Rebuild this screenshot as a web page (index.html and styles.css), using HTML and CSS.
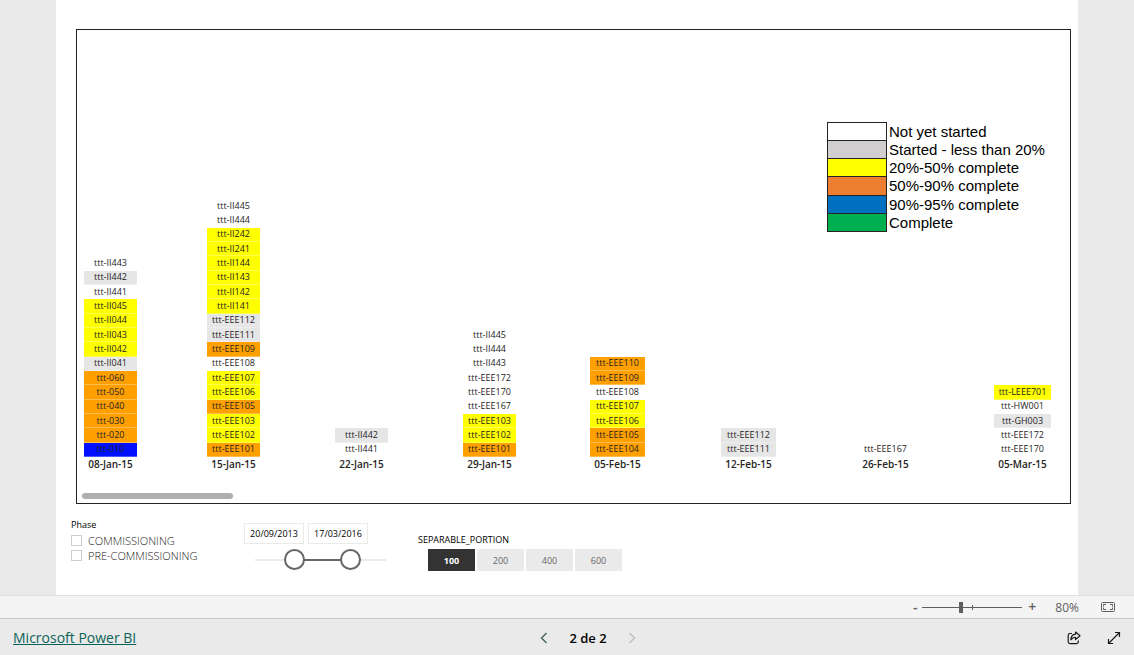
FILE: index.html
```
<!DOCTYPE html>
<html lang="es">
<head>
<meta charset="utf-8">
<meta name="viewport" content="width=device-width, initial-scale=1">
<title>Microsoft Power BI</title>
<link rel="stylesheet" href="styles.css">
</head>
<body>
<main class="stage">
  <div class="report">
    <section class="chart" aria-label="Schedule">
      <ul class="legend">
        <li><span class="swatch none"></span>Not yet started</li>
        <li><span class="swatch started"></span>Started - less than 20%</li>
        <li><span class="swatch quarter"></span>20%-50% complete</li>
        <li><span class="swatch half"></span>50%-90% complete</li>
        <li><span class="swatch almost"></span>90%-95% complete</li>
        <li><span class="swatch done"></span>Complete</li>
      </ul>
      <div class="columns">
        <section class="column">
          <ul class="stack">
            <li>ttt-II443</li><li class="grey">ttt-II442</li><li>ttt-II441</li><li class="yellow">ttt-II045</li><li class="yellow">ttt-II044</li><li class="yellow">ttt-II043</li><li class="yellow">ttt-II042</li><li class="grey">ttt-II041</li><li class="orange">ttt-060</li><li class="orange">ttt-050</li><li class="orange">ttt-040</li><li class="orange">ttt-030</li><li class="orange">ttt-020</li><li class="blue">ttt-010</li>
          </ul>
          <h2>08-Jan-15</h2>
        </section>
        <section class="column">
          <ul class="stack">
            <li>ttt-II445</li><li>ttt-II444</li><li class="yellow">ttt-II242</li><li class="yellow">ttt-II241</li><li class="yellow">ttt-II144</li><li class="yellow">ttt-II143</li><li class="yellow">ttt-II142</li><li class="yellow">ttt-II141</li><li class="grey">ttt-EEE112</li><li class="grey">ttt-EEE111</li><li class="orange">ttt-EEE109</li><li>ttt-EEE108</li><li class="yellow">ttt-EEE107</li><li class="yellow">ttt-EEE106</li><li class="orange">ttt-EEE105</li><li class="yellow">ttt-EEE103</li><li class="yellow">ttt-EEE102</li><li class="orange">ttt-EEE101</li>
          </ul>
          <h2>15-Jan-15</h2>
        </section>
        <section class="column">
          <ul class="stack">
            <li class="grey">ttt-II442</li><li>ttt-II441</li>
          </ul>
          <h2>22-Jan-15</h2>
        </section>
        <section class="column">
          <ul class="stack">
            <li>ttt-II445</li><li>ttt-II444</li><li>ttt-II443</li><li>ttt-EEE172</li><li>ttt-EEE170</li><li>ttt-EEE167</li><li class="yellow">ttt-EEE103</li><li class="yellow">ttt-EEE102</li><li class="orange">ttt-EEE101</li>
          </ul>
          <h2>29-Jan-15</h2>
        </section>
        <section class="column medium">
          <ul class="stack">
            <li class="orange">ttt-EEE110</li><li class="orange">ttt-EEE109</li><li>ttt-EEE108</li><li class="yellow">ttt-EEE107</li><li class="yellow">ttt-EEE106</li><li class="orange">ttt-EEE105</li><li class="orange">ttt-EEE104</li>
          </ul>
          <h2>05-Feb-15</h2>
        </section>
        <section class="column medium">
          <ul class="stack">
            <li class="grey">ttt-EEE112</li><li class="grey">ttt-EEE111</li>
          </ul>
          <h2>12-Feb-15</h2>
        </section>
        <section class="column medium">
          <ul class="stack">
            <li>ttt-EEE167</li>
          </ul>
          <h2>26-Feb-15</h2>
        </section>
        <section class="column wide">
          <ul class="stack">
            <li class="yellow">ttt-LEEE701</li><li>ttt-HW001</li><li class="grey">ttt-GH003</li><li>ttt-EEE172</li><li>ttt-EEE170</li>
          </ul>
          <h2>05-Mar-15</h2>
        </section>
      </div>
      <div class="scrollbar"><div class="scroll-thumb"></div></div>
    </section>

    <div class="filters">
      <fieldset class="phase">
        <legend>Phase</legend>
        <label><input type="checkbox"><span>COMMISSIONING</span></label>
        <label><input type="checkbox"><span>PRE-COMMISSIONING</span></label>
      </fieldset>
      <div class="dates">
        <div class="date-inputs">
          <input type="text" aria-label="Start date" value="20/09/2013">
          <input type="text" aria-label="End date" value="17/03/2016">
        </div>
        <div class="range">
          <input type="range" aria-label="Range start" min="0" max="100" value="26">
          <input type="range" aria-label="Range end" min="0" max="100" value="77">
        </div>
      </div>
      <div class="portion">
        <h3>SEPARABLE_PORTION</h3>
        <div class="tiles">
          <button type="button" class="selected" aria-pressed="true">100</button>
          <button type="button">200</button>
          <button type="button">400</button>
          <button type="button">600</button>
        </div>
      </div>
    </div>
  </div>
</main>

<div class="zoombar">
  <button type="button" class="zoom-step" aria-label="Zoom out">-</button>
  <input type="range" class="zoom-slider" aria-label="Zoom" min="0" max="100" value="38">
  <button type="button" class="zoom-step" aria-label="Zoom in">+</button>
  <span class="zoom-value">80%</span>
  <button type="button" class="fit" aria-label="Fit to page">
    <svg width="14" height="10" viewBox="0 0 14 10" fill="none" stroke="#605e5c"><rect x=".5" y=".5" width="13" height="9" rx="1"/><path d="M2.500 4.500v-2H5M9 2.500h2.500v2M11.500 5.500v2H9M5 7.500H2.500v-2"/></svg>
  </button>
</div>

<footer class="footer">
  <a href="#">Microsoft Power BI</a>
  <nav class="pager" aria-label="Pages">
    <button type="button" aria-label="Previous page"><svg width="8" height="12" viewBox="0 0 8 12" fill="none" stroke="#3b5a5a" stroke-width="1.200"><path d="M6.500 1 1.500 6l5 5"/></svg></button>
    <span>2 de 2</span>
    <button type="button" aria-label="Next page" disabled><svg width="8" height="12" viewBox="0 0 8 12" fill="none" stroke="#bdbbb9" stroke-width="1.200"><path d="m1.500 1 5 5-5 5"/></svg></button>
  </nav>
  <div class="actions">
    <button type="button" aria-label="Share"><svg width="14" height="14" viewBox="0 0 14 14" fill="none" stroke="#1b1a19" stroke-width="1.200" stroke-linejoin="round"><path d="M5 2.500H3a1.800 1.800 0 0 0-1.800 1.800v6.500A1.800 1.800 0 0 0 3 12.600h6.500a1.800 1.800 0 0 0 1.800-1.800V9.500"/><path d="M8.600 1 13 4.800 8.600 8.600V6.400C6.500 6.400 5 7 3.800 8.800 4 5.500 5.800 3.400 8.600 3.200z"/></svg></button>
    <button type="button" aria-label="Full screen"><svg width="14" height="14" viewBox="0 0 14 14" fill="none" stroke="#1b1a19" stroke-width="1.200"><path d="M1.500 12.500l11-11M8 1.500h4.500V6M1.500 8v4.500H6"/></svg></button>
  </div>
</footer>
</body>
</html>
```
FILE: styles.css
```
* { box-sizing: border-box; }

body {
  margin: 0;
  min-height: 100vh;
  display: flex;
  flex-direction: column;
  background: #eaeaea;
  color: #252423;
  font-family: "Open Sans", "Noto Sans", sans-serif;
  font-size: 9px;
}

ul { list-style: none; margin: 0; padding: 0; }
h2, h3 { margin: 0; }
button { font: inherit; color: inherit; border: 0; padding: 0; background: none; cursor: pointer; }
svg { display: block; }

.stage { flex: 1; display: flex; padding: 0 56px; }
.report { flex: 1; background: #fff; padding: 29px 7px 24px 15px; }

/* Chart */
.chart {
  position: relative;
  margin-left: 5px;
  padding: 169px 19px 4px 7px;
  border: 1px solid #252423;
}
.columns {
  display: grid;
  grid-template-columns: 123fr 128fr 128fr 127fr 131fr 137fr 136fr 57fr;
}
.column { width: 53px; text-align: center; }
.column.medium { width: 55px; }
.column.wide { width: 57px; }
.stack {
  display: flex;
  flex-direction: column;
  justify-content: flex-end;
  height: 258px;
}
.stack li {
  flex: none;
  display: flex;
  align-items: center;
  justify-content: center;
  height: calc(100% / 18);
  line-height: 12px;
  white-space: nowrap;
  border-bottom: 1px solid rgba(255, 255, 255, 0.3);
}
.yellow { background: #ffff00; }
.grey { background: #e6e6e6; }
.orange { background: #ffa000; }
.blue { background: #0010ff; }
.column h2 {
  display: flex;
  justify-content: center;
  font-size: 10px;
  font-weight: 600;
  line-height: 14px;
  white-space: nowrap;
}

.scrollbar { margin: 22px -2px 0; }
.scroll-thumb { width: 151px; height: 6px; border-radius: 3px; background: #b0afae; }

/* Legend laid over the chart */
.legend {
  position: absolute;
  top: 92px;
  right: 24px;
  display: grid;
  grid-auto-rows: 1fr;
  width: 219px;
  height: 109px;
  color: #000;
  font: 15px/20px "Liberation Sans", Arial, sans-serif;
}
.legend li { display: flex; gap: 2px; min-height: 0; white-space: nowrap; }
.swatch { flex: none; width: 60px; border: 1px solid #252423; margin-bottom: -1px; }
.none { background: #fff; }
.started { background: #d0cece; }
.quarter { background: #ffff00; }
.half { background: #ed7d31; }
.almost { background: #0070c0; }
.done { background: #00b050; }

/* Filters */
.filters { display: flex; align-items: flex-start; padding-top: 14px; }
.phase { margin: 0; padding: 0; border: 0; width: 173px; }
.phase legend { padding: 0; line-height: 14px; color: #000; }
.phase label { display: flex; align-items: center; gap: 6px; height: 15px; font-size: 11px; font-weight: 300; color: #252423; }
.phase legend + label { margin-top: 1px; }
.phase input { appearance: none; width: 11px; height: 11px; margin: 0; border: 1px solid #d2cccb; background: #fff; }

.dates { width: 174px; padding-top: 5px; }
.date-inputs { display: flex; gap: 4px; }
.date-inputs input {
  width: 60px;
  height: 21px;
  padding: 0 5px;
  border: 1px solid #eaeaea;
  font: inherit;
  color: #000;
  text-align: center;
}
.range {
  display: grid;
  width: 131px;
  margin: 5px 0 0 11px;
  background:
    linear-gradient(#666, #666) 39px center / 56px 2px no-repeat,
    linear-gradient(#eaeaea, #eaeaea) center / 100% 2px no-repeat;
}
.range input {
  grid-area: 1 / 1;
  appearance: none;
  width: 100%;
  height: 21px;
  margin: 0;
  background: none;
  pointer-events: none;
}
.range input::-webkit-slider-thumb {
  appearance: none;
  width: 21px;
  height: 21px;
  border: 2px solid #666;
  border-radius: 50%;
  background: #fff;
  pointer-events: auto;
}

.portion { padding-top: 16px; }
.portion h3 { font-size: 9px; font-weight: 400; line-height: 12px; color: #000; }
.tiles { display: flex; gap: 2px; padding: 3px 0 0 10px; }
.tiles button { width: 47px; height: 22px; background: #eaeaea; color: #666; }
.tiles .selected { background: #333; color: #fff; font-weight: 700; }

/* Zoom bar */
.zoombar {
  display: flex;
  align-items: center;
  justify-content: flex-end;
  height: 24px;
  padding-right: 19px;
  border-top: 1px solid #e1dfdd;
  border-bottom: 1px solid #c8c6c4;
  background: #f4f4f4;
  color: #605e5c;
  font-size: 12px;
}
.zoom-step { width: 14px; font-size: 14px; line-height: 20px; font-weight: 600; }
.zoom-slider {
  appearance: none;
  width: 100px;
  height: 14px;
  margin: 0 3px 0 0;
  background:
    linear-gradient(#605e5c, #605e5c) 50px center / 1px 5px no-repeat,
    linear-gradient(#605e5c, #605e5c) center / 100% 1px no-repeat;
}
.zoom-slider::-webkit-slider-thumb { appearance: none; width: 4px; height: 11px; background: #605e5c; }
.zoom-value { margin: 0 22px 0 16px; }

/* Footer */
.footer {
  display: grid;
  grid-template-columns: 1fr auto 1fr;
  align-items: center;
  height: 36px;
  padding: 2px 13px 0;
}
.footer a { justify-self: start; color: #0b6358; font-size: 14px; line-height: 20px; }
.pager { display: flex; align-items: center; gap: 21px; padding-left: 42px; color: #000; font-size: 13px; font-weight: 600; line-height: 20px; }
.pager button:disabled { cursor: default; }
.actions { display: flex; justify-content: flex-end; gap: 26px; }
```
